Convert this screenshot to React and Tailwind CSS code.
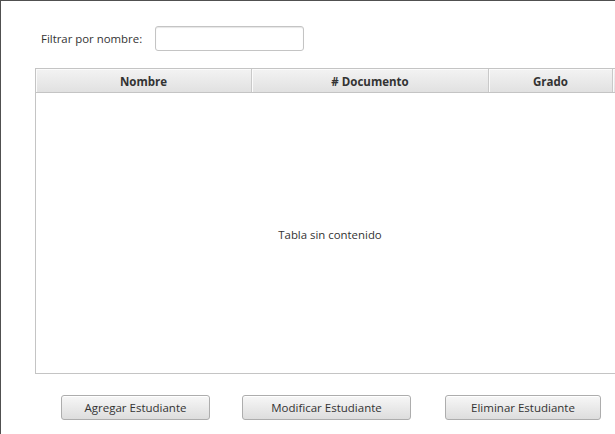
import React from "react";

const font = { fontFamily: '"Open Sans", "Noto Sans", sans-serif' };

const columns = [
  { label: "Nombre", width: "w-[216px]" },
  { label: "# Documento", width: "w-[237px]" },
  { label: "Grado", width: "w-[124px]" },
];

const Button = ({ children, width }) => (
  <button
    className={`${width} h-[25px] rounded-[3px] border border-[#adadad] bg-gradient-to-b from-[#f7f7f7] to-[#dddddd] text-[11.5px] text-[#333] shadow-[inset_0_1px_0_#ffffff]`}
  >
    {children}
  </button>
);

export default function App() {
  return (
    <div
      className="w-[615px] h-[434px] overflow-hidden bg-white border-l border-t border-[#505050]"
      style={font}
    >
      {/* Filter */}
      <div className="flex items-center pt-[25px] pl-[40px]">
        <span className="text-[11.4px] text-[#333] w-[114px]">Filtrar por nombre:</span>
        <input
          className="w-[149px] h-[25px] rounded-[3px] border border-[#c4c4c4] bg-white shadow-[inset_0_1px_1px_#e6e6e6] outline-none"
        />
      </div>

      {/* Table */}
      <div className="ml-[34px] mt-[17px] w-[620px] h-[306px] border border-[#c4c4c4] flex flex-col">
        <div className="flex h-[24px] border-b border-[#c4c4c4] bg-gradient-to-b from-[#f3f3f3] to-[#e1e1e1] shrink-0">
          {columns.map((c) => (
            <div
              key={c.label}
              className={`${c.width} shrink-0 flex items-center justify-center pt-[2px] border-r border-[#c9c9c9] shadow-[inset_1px_1px_0_#fbfbfb] text-[11.5px] font-bold text-[#333]`}
            >
              {c.label}
            </div>
          ))}
          <div className="flex-1 shadow-[inset_1px_1px_0_#fbfbfb]" />
        </div>
        <div className="flex-1 flex items-center justify-center pr-[30px] pt-[4px]">
          <span className="text-[11.4px] text-[#333]">Tabla sin contenido</span>
        </div>
      </div>

      {/* Actions */}
      <div className="flex mt-[21px] pl-[60px]">
        <Button width="w-[149px]">Agregar Estudiante</Button>
        <div className="w-[32px]" />
        <Button width="w-[169px]">Modificar Estudiante</Button>
        <div className="w-[34px]" />
        <Button width="w-[156px]">Eliminar Estudiante</Button>
      </div>
    </div>
  );
}
